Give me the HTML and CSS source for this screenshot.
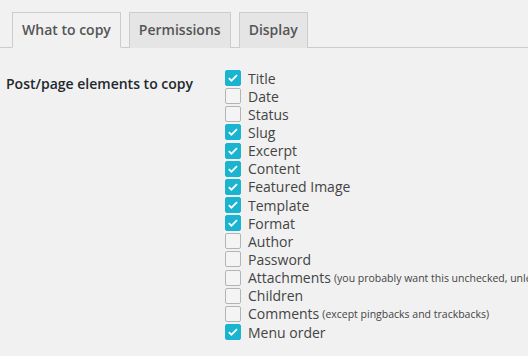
FILE: index.html
```html
<!DOCTYPE html>
<html lang="en">
<head>
  <meta charset="UTF-8" />
  <title>Duplicate Post Options</title>
  <link rel="stylesheet" href="styles.css">
</head>
<body>

  <h2 class="nav-tabs">
    <a class="nav-tab active" href="#what">What to copy</a>
    <a class="nav-tab" href="#permissions">Permissions</a>
    <a class="nav-tab" href="#display">Display</a>
  </h2>

  <div class="form-row">
    <div class="row-title">Post/page elements to copy</div>
    <div class="row-fields">
      <label><input type="checkbox" checked> Title</label>
      <label><input type="checkbox"> Date</label>
      <label><input type="checkbox"> Status</label>
      <label><input type="checkbox" checked> Slug</label>
      <label><input type="checkbox" checked> Excerpt</label>
      <label><input type="checkbox" checked> Content</label>
      <label><input type="checkbox" checked> Featured Image</label>
      <label><input type="checkbox" checked> Template</label>
      <label><input type="checkbox" checked> Format</label>
      <label><input type="checkbox"> Author</label>
      <label><input type="checkbox"> Password</label>
      <label><input type="checkbox"> Attachments <span class="description">(you probably want this unchecked, unless you have very special requirements)</span></label>
      <label><input type="checkbox"> Children</label>
      <label><input type="checkbox"> Comments <span class="description">(except pingbacks and trackbacks)</span></label>
      <label><input type="checkbox" checked> Menu order</label>
    </div>
  </div>

</body>
</html>
```

FILE: styles.css
```css
* {
  box-sizing: border-box;
}

body {
  margin: 0;
  background-color: #f1f1f1;
  color: #444;
  font-family: 'Open Sans', sans-serif;
  font-size: 14px;
  overflow: hidden;
}

.nav-tabs {
  display: flex;
  gap: 8px;
  margin: 0;
  padding: 12px 0 0 12px;
  border-bottom: 1px solid #ccc;
}

.nav-tab {
  display: block;
  margin-bottom: -1px;
  padding: 5px 9px;
  font-size: 14px;
  line-height: 24px;
  font-weight: 600;
  color: #555;
  text-decoration: none;
  background-color: #e5e5e5;
  border: 1px solid #ccc;
  border-bottom: none;
}

.nav-tab.active {
  background-color: #f1f1f1;
  border-bottom: 1px solid #f1f1f1;
}

.form-row {
  display: flex;
  white-space: nowrap;
}

.row-title {
  width: 225px;
  flex-shrink: 0;
  padding: 26px 0 0 6px;
  font-weight: 600;
  color: #23282d;
}

.row-fields {
  padding-top: 21px;
  overflow: hidden;
}

.row-fields label {
  display: flex;
  align-items: center;
  height: 18.15px;
  color: #444;
}

.row-fields input {
  appearance: none;
  width: 16px;
  height: 16px;
  margin: 0 7px 0 0;
  flex-shrink: 0;
  border: 1px solid #b4b4b4;
  border-radius: 2px;
  background-color: #f4f4f4;
}

.row-fields input:checked {
  border-color: #1ab3d0;
  background-color: #1ab3d0;
  background-image: url("data:image/svg+xml,%3Csvg xmlns='http://www.w3.org/2000/svg' viewBox='0 0 16 16'%3E%3Cpath d='M3.2 8.2l3 2.9 6.4-6.4' fill='none' stroke='%23fff' stroke-width='2'/%3E%3C/svg%3E");
}

.description {
  margin-left: 3px;
  font-size: 10.5px;
}
```
